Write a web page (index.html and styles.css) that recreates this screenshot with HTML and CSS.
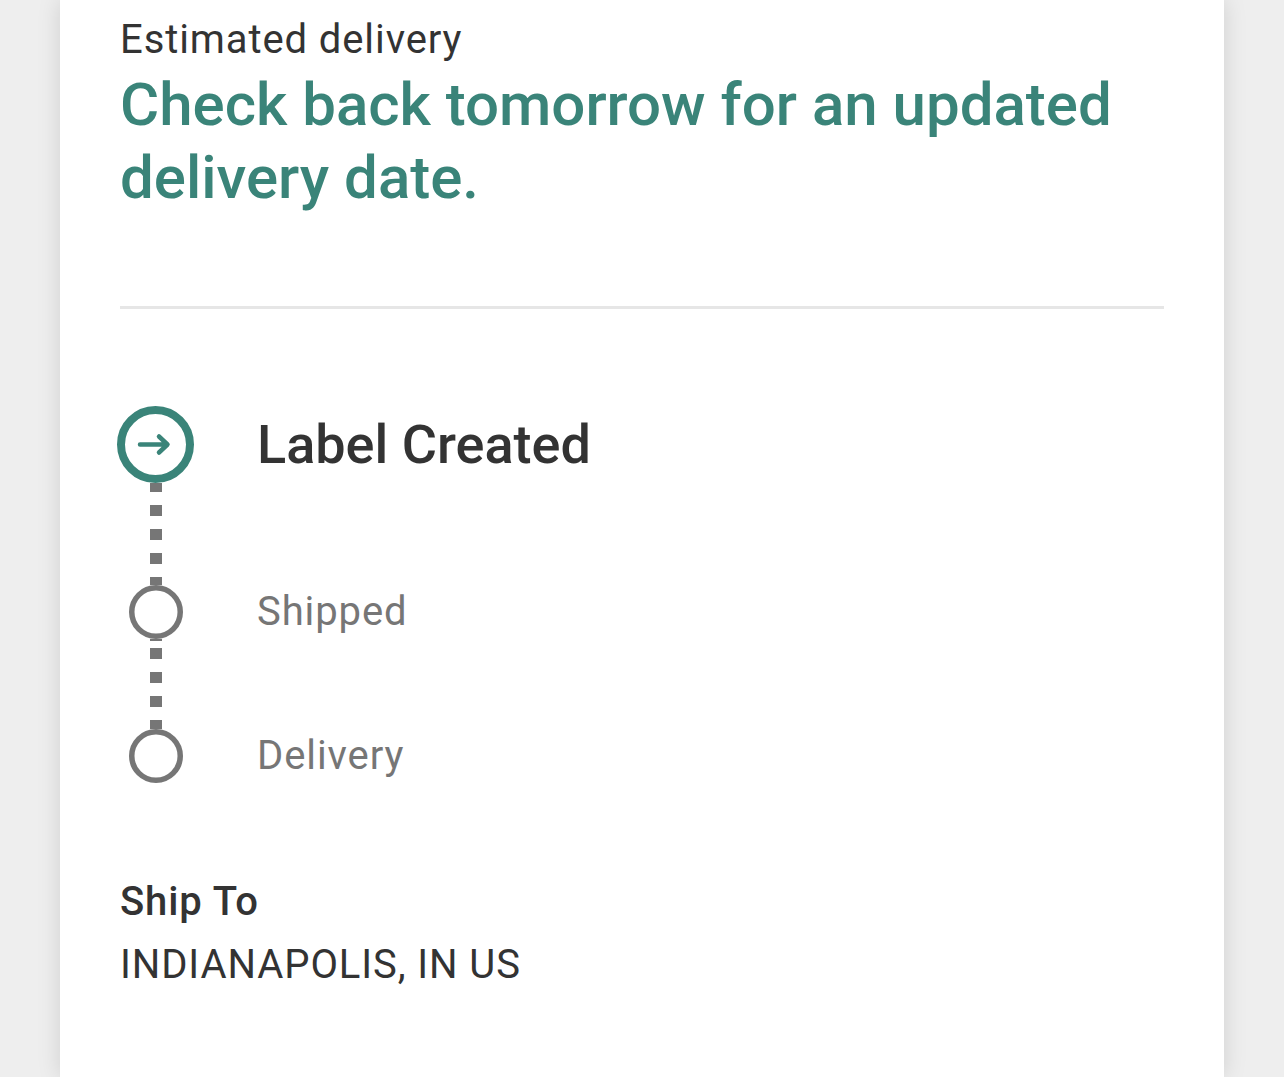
FILE: index.html
```html
<!DOCTYPE html>
<html lang="en">
<head>
<meta charset="utf-8">
<title>Tracking</title>
<link rel="stylesheet" href="styles.css">
</head>
<body>
<main class="card">
  <section class="estimate">
    <p class="eyebrow">Estimated delivery</p>
    <h1 class="headline">Check back tomorrow for an updated delivery date.</h1>
  </section>
  <hr class="divider">
  <ol class="timeline">
    <li class="step step-current">
      <span class="marker">
        <svg class="icon-current" width="77" height="77" viewBox="0 0 77 77" aria-hidden="true">
          <circle cx="38.5" cy="38.5" r="34.5" fill="none" stroke="currentColor" stroke-width="8"/>
          <path d="M23 38.5H50M42 30.5L50.5 38.5L42 46.5" fill="none" stroke="currentColor" stroke-width="4.5" stroke-linecap="round" stroke-linejoin="round"/>
        </svg>
      </span>
      <span class="step-label">Label Created</span>
    </li>
    <li class="connector connector-long" aria-hidden="true"><span class="dash"></span></li>
    <li class="step">
      <span class="marker">
        <svg class="icon-pending" width="54" height="54" viewBox="0 0 54 54" aria-hidden="true">
          <circle cx="27" cy="27" r="24.25" fill="none" stroke="currentColor" stroke-width="5.5"/>
        </svg>
      </span>
      <span class="step-label step-label-pending">Shipped</span>
    </li>
    <li class="connector connector-short" aria-hidden="true"><span class="dash"></span></li>
    <li class="step">
      <span class="marker">
        <svg class="icon-pending" width="54" height="54" viewBox="0 0 54 54" aria-hidden="true">
          <circle cx="27" cy="27" r="24.25" fill="none" stroke="currentColor" stroke-width="5.5"/>
        </svg>
      </span>
      <span class="step-label step-label-pending">Delivery</span>
    </li>
  </ol>
  <section class="ship-to">
    <h2 class="ship-title">Ship To</h2>
    <p class="ship-address">INDIANAPOLIS, IN US</p>
  </section>
</main>
</body>
</html>
```

FILE: styles.css
```css
* {
  box-sizing: border-box;
}

html, body {
  margin: 0;
  padding: 0;
}

body {
  background: #eeeeee;
  font-family: Roboto, "Liberation Sans", Arial, sans-serif;
  color: #333333;
  min-height: 100vh;
  overflow: hidden;
}

.card {
  margin: 0 60px;
  width: 1164px;
  min-height: 100vh;
  background: #ffffff;
  box-shadow: 0 0 22px rgba(0, 0, 0, 0.13);
  padding: 16px 60px 60px;
}

.eyebrow {
  margin: 0;
  font-size: 40px;
  line-height: 48px;
  font-weight: 400;
  letter-spacing: 0.9px;
  color: #333333;
}

.headline {
  margin: 4px 0 0;
  font-size: 60px;
  line-height: 73px;
  font-weight: 500;
  color: #3a8479;
}

.divider {
  margin: 92px 0 0;
  border: 0;
  height: 3px;
  background: #e6e6e6;
}

.timeline {
  list-style: none;
  margin: 97px 0 0;
  padding: 0;
}

.step {
  display: flex;
  align-items: center;
  gap: 66px;
}

.marker {
  width: 71px;
  display: flex;
  justify-content: center;
  flex: none;
}

.marker svg {
  display: block;
  flex: none;
}

.icon-current {
  color: #3a8479;
}

.icon-pending {
  color: #767676;
}

.step-label {
  font-size: 54px;
  line-height: 64px;
  font-weight: 500;
  color: #333333;
}

.step-label-pending {
  font-size: 40px;
  line-height: 48px;
  font-weight: 400;
  letter-spacing: 0.9px;
  color: #767676;
}

.connector {
  width: 71px;
  display: flex;
  justify-content: center;
}

.dash {
  width: 12px;
  height: 100%;
  background: repeating-linear-gradient(to bottom, #767676 0, #767676 11px, transparent 11px, transparent 24px);
}

.connector-long {
  height: 102px;
}

.connector-long .dash {
  background-position: 0 -2px;
}

.connector-short {
  height: 90px;
}

.connector-short .dash {
  background-position: 0 9px;
}

.ship-to {
  margin-top: 95px;
}

.ship-title {
  margin: 0;
  font-size: 40px;
  line-height: 48px;
  font-weight: 500;
  letter-spacing: 0.9px;
  color: #333333;
}

.ship-address {
  margin: 15px 0 0;
  font-size: 40px;
  line-height: 48px;
  font-weight: 400;
  letter-spacing: 0.9px;
  color: #333333;
}
```
